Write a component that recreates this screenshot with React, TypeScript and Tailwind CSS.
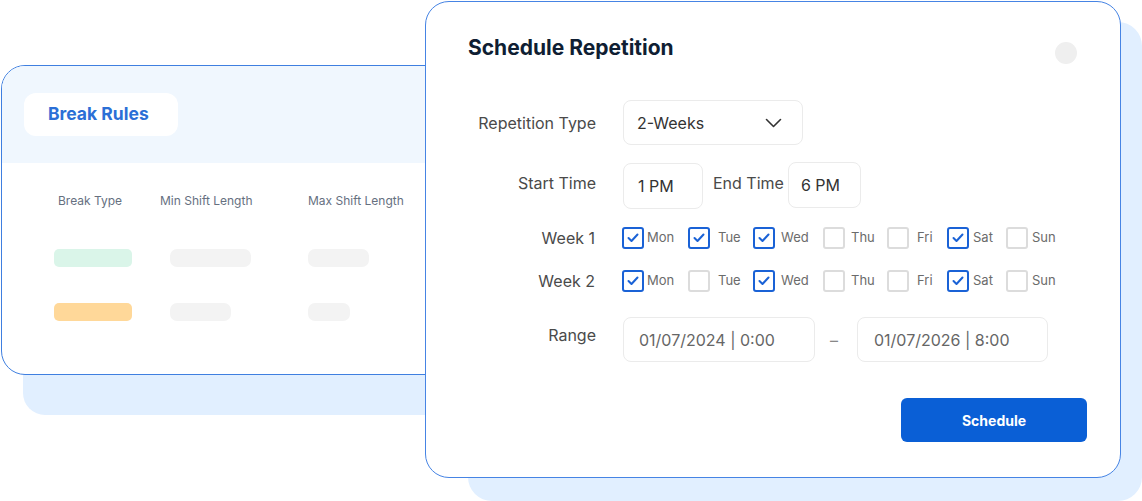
const days = [
  { name: "Mon", col: "w-[66px]", ml: "ml-[3px]" },
  { name: "Tue", col: "w-[65px]", ml: "ml-[8px]" },
  { name: "Wed", col: "w-[70px]", ml: "ml-[6px]" },
  { name: "Thu", col: "w-[64px]", ml: "ml-[6px]" },
  { name: "Fri", col: "w-[60px]", ml: "ml-[8px]" },
  { name: "Sat", col: "w-[59px]", ml: "ml-[4px]" },
  { name: "Sun", col: "w-[59px]", ml: "ml-[4px]" },
];

const week1 = [true, true, true, false, false, true, false];
const week2 = [true, false, true, false, false, true, false];

function Box({ checked }: { checked: boolean }) {
  if (checked) {
    return (
      <div className="w-[22px] h-[22px] rounded-[3px] border-2 border-[#1a62d6] flex items-center justify-center shrink-0">
        <svg width="12" height="10" viewBox="0 0 12 10" fill="none" stroke="#1a62d6" strokeWidth="2" strokeLinecap="round" strokeLinejoin="round">
          <polyline points="1.5 5 4.5 8 10.5 1.5" />
        </svg>
      </div>
    );
  }
  return <div className="w-[22px] h-[22px] rounded-[3px] border-2 border-[#dcdcdc] shrink-0" />;
}

function WeekRow({ label, values }: { label: string; values: boolean[] }) {
  return (
    <div className="flex items-center h-[22px]">
      <div className="w-[128px] text-right text-[16px] text-[#4a4a4a] pr-[1px]">{label}</div>
      <div className="flex items-center ml-[26px]">
        {days.map((d, i) => (
          <div key={d.name} className={`${d.col} flex items-center`}>
            <Box checked={values[i]} />
            <span className={`${d.ml} text-[13px] text-[#6b6b6b]`}>{d.name}</span>
          </div>
        ))}
      </div>
    </div>
  );
}

function BreakRules() {
  return (
    <>
      <div className="absolute left-[23px] top-[100px] w-[450px] h-[315px] rounded-[22px] bg-[#e1efff]" />
      <div className="absolute left-[1px] top-[65px] w-[470px] h-[310px] rounded-[24px] border border-[#3f7fe0] bg-white overflow-hidden flex flex-col">
        <div className="h-[97px] bg-[#f0f7fe] pt-[27px] pl-[22px]">
          <div className="w-[154px] h-[43px] rounded-[12px] bg-white flex items-center pl-[24px] text-[17.5px] font-bold text-[#2b6fd6]">
            Break Rules
          </div>
        </div>
        <div className="relative flex-1">
          <div className="absolute top-[29px] left-[56px] text-[12px] text-[#66707f]">Break Type</div>
          <div className="absolute top-[29px] left-[158px] text-[12px] text-[#66707f]">Min Shift Length</div>
          <div className="absolute top-[29px] left-[306px] text-[12px] text-[#66707f]">Max Shift Length</div>
          <div className="absolute top-[86px] left-[52px] w-[78px] h-[18px] rounded-[5px] bg-[#daf5e9]" />
          <div className="absolute top-[86px] left-[168px] w-[81px] h-[18px] rounded-[7px] bg-[#f3f3f3]" />
          <div className="absolute top-[86px] left-[306px] w-[61px] h-[18px] rounded-[7px] bg-[#f3f3f3]" />
          <div className="absolute top-[140px] left-[52px] w-[78px] h-[18px] rounded-[5px] bg-[#ffd899]" />
          <div className="absolute top-[140px] left-[168px] w-[61px] h-[18px] rounded-[7px] bg-[#f3f3f3]" />
          <div className="absolute top-[140px] left-[306px] w-[42px] h-[18px] rounded-[7px] bg-[#f3f3f3]" />
        </div>
      </div>
    </>
  );
}

function Schedule() {
  return (
    <>
      <div className="absolute left-[468px] top-[22px] right-0 bottom-0 rounded-[24px] bg-[#e1efff]" />
      <div className="absolute left-[425px] top-[1px] w-[696px] h-[477px] rounded-[24px] border border-[#4684e4] bg-white pl-[42px]">
        <div className="mt-[30px] flex items-start justify-between pr-[43px]">
          <h1 className="mt-[2px] text-[21px] font-bold text-[#0f1e33] leading-[28px]">Schedule Repetition</h1>
          <div className="w-[22px] h-[22px] rounded-full bg-[#efefef] mt-[10px]" />
        </div>

        <div className="mt-[36px] flex items-center">
          <div className="w-[128px] text-right text-[16px] text-[#4a4a4a]">Repetition Type</div>
          <div className="ml-[27px] w-[180px] h-[45px] rounded-[8px] border border-[#ebebeb] flex items-center justify-between pl-[13px] pr-[20px]">
            <span className="text-[16px] text-[#333]">2-Weeks</span>
            <svg width="17" height="10" viewBox="0 0 17 10" fill="none" stroke="#333" strokeWidth="1.6" strokeLinecap="round" strokeLinejoin="round">
              <polyline points="1.5 1.5 8.5 8.5 15.5 1.5" />
            </svg>
          </div>
        </div>

        <div className="mt-[17px] flex items-start">
          <div className="w-[128px] text-right text-[16px] text-[#4a4a4a] mt-[9px]">Start Time</div>
          <div className="ml-[27px] w-[80px] h-[46px] mt-[1px] rounded-[8px] border border-[#ebebeb] flex items-center pl-[14px] text-[16px] text-[#333]">
            1 PM
          </div>
          <div className="ml-[10px] text-[16px] text-[#4a4a4a] mt-[9px]">End Time</div>
          <div className="ml-[4px] w-[73px] h-[46px] rounded-[8px] border border-[#ebebeb] flex items-center pl-[12px] text-[16px] text-[#333]">
            6 PM
          </div>
        </div>

        <div className="mt-[18px] flex flex-col gap-[21px]">
          <WeekRow label="Week 1" values={week1} />
          <WeekRow label="Week 2" values={week2} />
        </div>

        <div className="mt-[25px] flex items-start">
          <div className="w-[128px] text-right text-[16px] text-[#4a4a4a] mt-[6px]">Range</div>
          <div className="ml-[27px] w-[192px] h-[45px] rounded-[8px] border border-[#ebebeb] flex items-center pl-[15px] text-[16px] text-[#666]">
            01/07/2024 | 0:00
          </div>
          <div className="w-[42px] h-[45px] flex items-center justify-center pr-[4px] text-[16px] text-[#888]">–</div>
          <div className="w-[191px] h-[45px] rounded-[8px] border border-[#ebebeb] flex items-center pl-[16px] text-[16px] text-[#666]">
            01/07/2026 | 8:00
          </div>
        </div>

        <div className="mt-[36px] flex justify-end pr-[33px]">
          <button className="w-[186px] h-[44px] rounded-[6px] bg-[#0a5fd6] text-white text-[14px] font-bold">
            Schedule
          </button>
        </div>
      </div>
    </>
  );
}

export default function App() {
  return (
    <div className="relative w-[1142px] h-[501px] bg-white overflow-hidden font-['Inter',sans-serif]">
      <BreakRules />
      <Schedule />
    </div>
  );
}
